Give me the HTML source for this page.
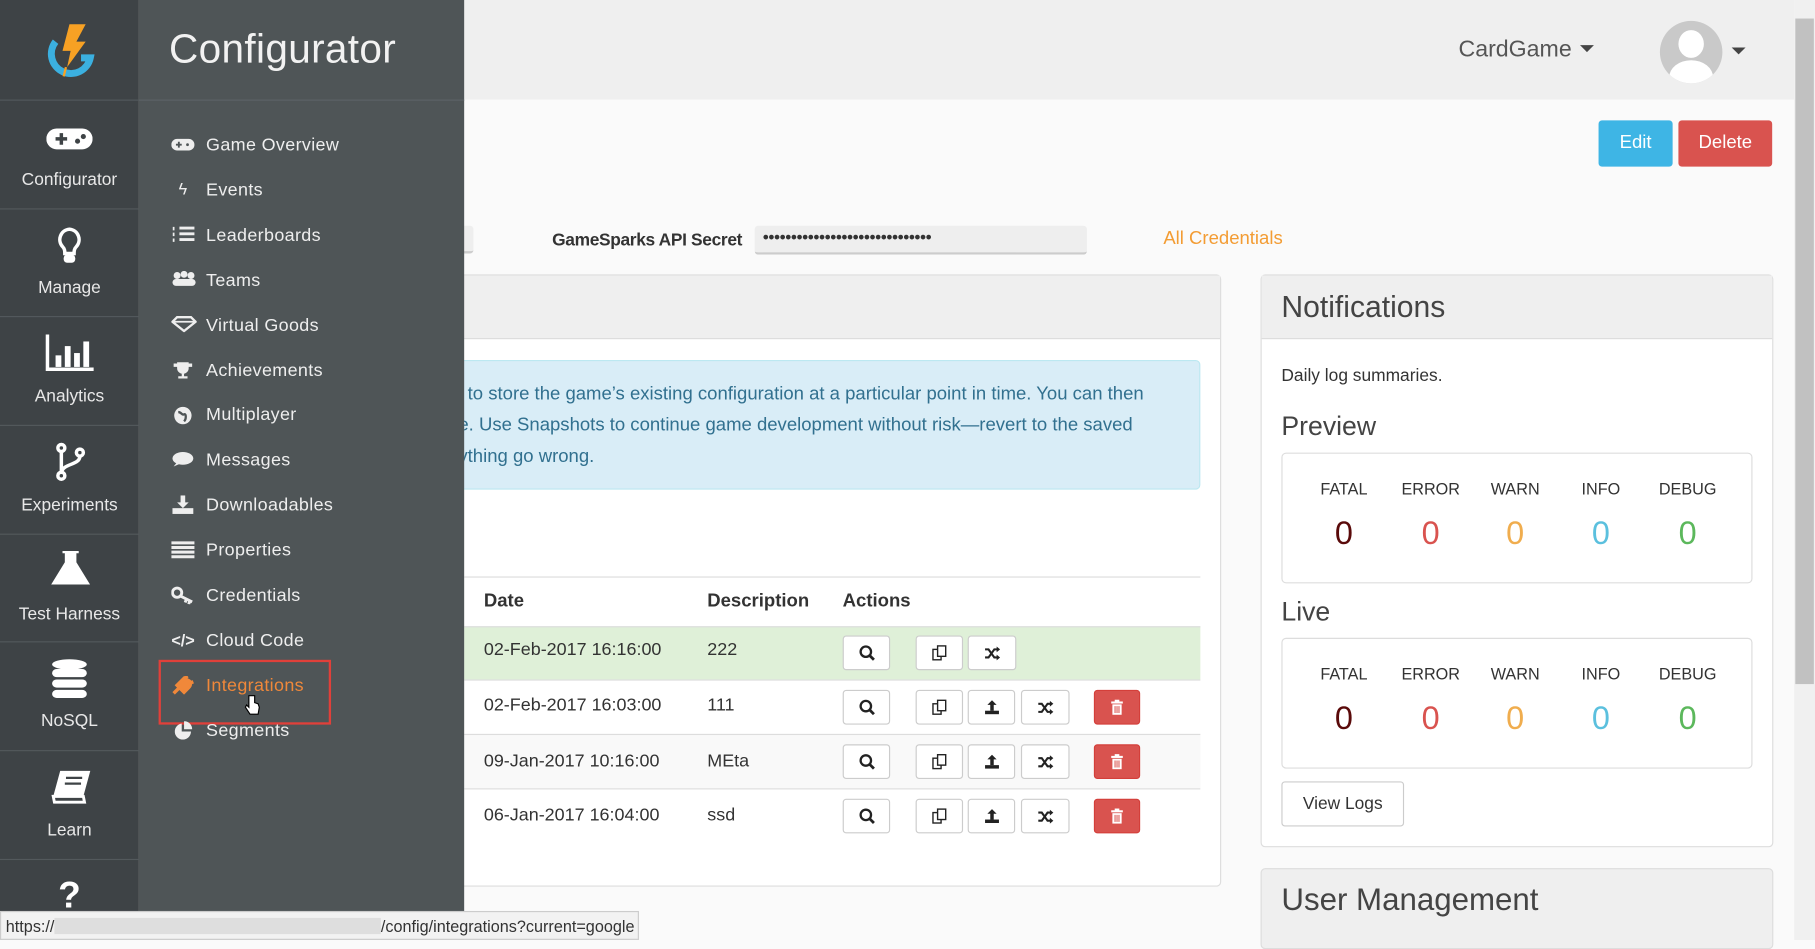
<!DOCTYPE html>
<html><head><meta charset="utf-8"><style>
*{box-sizing:border-box;margin:0;padding:0}
html,body{width:1815px;height:940px;overflow:hidden;background:#fafafa;font-family:"Liberation Sans",sans-serif}
#w{position:absolute;left:0;top:0;width:1568px;height:812px;transform:scale(1.15753);transform-origin:0 0;background:#fafafa}
.a{position:absolute}
.bar{left:0;top:0;width:120px;height:812px;background:#3e4346}
.bi{position:absolute;left:0;width:120px;border-top:1px solid #53595c;color:#e8e8e8;font-size:15px;text-align:center}
.bi span{position:absolute;left:0;right:0}
.p2{left:120px;top:0;width:281px;height:812px;background:#4f5557}
.mi{position:absolute;left:58px;color:#eee;font-size:15.5px;letter-spacing:.3px}
.mic{position:absolute;left:28px;width:20px;text-align:center;color:#eee;font-size:14px}
.btn{position:absolute;background:#fff;border:1px solid #ccc;border-radius:3px;height:30px;display:flex;align-items:center;justify-content:center;color:#333;font-size:13px}
.del{background:#d9534f;border-color:#d43f3a;color:#fff}
.lbl{position:absolute;font-size:14px;color:#333;width:80px;text-align:center}
.z{position:absolute;font-size:28px;width:80px;text-align:center}
.td{position:absolute;font-size:15.5px;color:#333}
</style></head><body><div id="w">
<div class="a" style="left:401px;top:0;width:1149px;height:86px;background:#efefef"></div>
<div class="a" style="left:1260px;top:32px;font-size:20px;color:#555">CardGame <span style="display:inline-block;border:6px solid transparent;border-top:6px solid #444;vertical-align:-2px;margin-left:2px"></span></div>
<div class="a" style="left:1434px;top:18px;width:54px;height:54px;border-radius:50%;background:#c9c9c9;overflow:hidden"><div class="a" style="left:16px;top:8px;width:22px;height:24px;border-radius:50%;background:#fff"></div><div class="a" style="left:8px;top:34px;width:38px;height:30px;border-radius:50% 50% 0 0;background:#fff"></div></div>
<div class="a" style="left:1496px;top:41px;border:6px solid transparent;border-top:6px solid #444"></div>
<div class="a" style="left:1550px;top:0;width:18px;height:812px;background:#f0f0f0"></div>
<div class="a" style="left:1551px;top:16px;width:16px;height:575px;background:#c1c1c1"></div>
<div class="a" style="left:1381px;top:104px;width:64px;height:40px;background:#3eb5e5;border-radius:3px;color:#fff;font-size:16px;text-align:center;line-height:40px">Edit</div>
<div class="a" style="left:1450px;top:104px;width:81px;height:40px;background:#d9534f;border-radius:3px;color:#fff;font-size:16px;text-align:center;line-height:40px">Delete</div>
<div class="a" style="left:395px;top:195px;width:14px;height:24px;background:#eee;border-radius:3px;border-bottom:2px solid #ccc"></div>
<div class="a" style="left:477px;top:199px;font-size:15px;font-weight:bold;color:#333;letter-spacing:-.3px;white-space:nowrap">GameSparks API Secret</div>
<div class="a" style="left:652px;top:195px;width:287px;height:25px;background:#eee;border-radius:3px;border-bottom:2px solid #ccc;font-size:15px;letter-spacing:-.4px;padding:2px 0 0 7px;color:#333;white-space:nowrap;overflow:hidden">••••••••••••••••••••••••••••••</div>
<div class="a" style="left:1005px;top:198px;font-size:16px;color:#f39c33">All Credentials</div>
<div class="a" style="left:395px;top:237px;width:660px;height:529px;border:1px solid #ddd;border-radius:4px;background:#fff"></div>
<div class="a" style="left:396px;top:238px;width:658px;height:55px;background:#efefef;border-bottom:1px solid #ddd"></div>
<div class="a" style="left:395px;top:311px;width:642px;height:112px;background:#d9edf7;border:1px solid #bce8f1;border-radius:4px;color:#31708f;font-size:16px;line-height:27px;padding:15px 0 0 8px;white-space:nowrap">
to store the game’s existing configuration at a particular point in time. You can then<br><span style="margin-left:-8px">e. Use Snapshots to continue game development without risk—revert to the saved</span><br><span style="margin-left:-8px">ything go wrong.</span></div>
<div class="a" style="left:401px;top:498px;width:636px;border-top:1px solid #ddd"></div>
<div class="a" style="left:418px;top:511px;font-size:16px;font-weight:bold;color:#333">Date</div>
<div class="a" style="left:611px;top:511px;font-size:16px;font-weight:bold;color:#333">Description</div>
<div class="a" style="left:728px;top:511px;font-size:16px;font-weight:bold;color:#333">Actions</div>
<div class="a" style="left:401px;top:541px;width:636px;height:46px;background:#dff0d8;border-top:1px solid #ddd"></div>
<div class="a" style="left:401px;top:587px;width:636px;height:47px;border-top:1px solid #ddd"></div>
<div class="a" style="left:401px;top:634px;width:636px;height:47px;background:#f9f9f9;border-top:1px solid #ddd"></div>
<div class="a" style="left:401px;top:681px;width:636px;height:47px;border-top:1px solid #ddd"></div>
<div class="td" style="left:418px;top:553px">02-Feb-2017 16:16:00</div><div class="td" style="left:611px;top:553px">222</div>
<div class="td" style="left:418px;top:601px">02-Feb-2017 16:03:00</div><div class="td" style="left:611px;top:601px">111</div>
<div class="td" style="left:418px;top:649px">09-Jan-2017 10:16:00</div><div class="td" style="left:611px;top:649px">MEta</div>
<div class="td" style="left:418px;top:696px">06-Jan-2017 16:04:00</div><div class="td" style="left:611px;top:696px">ssd</div>
<svg width="0" height="0" style="position:absolute"><defs>
<g id="srch"><circle cx="6" cy="6" r="4.5" fill="none" stroke="#222" stroke-width="2"/><path d="M9.5 9.5L13 13" stroke="#222" stroke-width="2.4"/></g>
<g id="cpy"><rect x="1" y="4" width="7" height="9" fill="#fff" stroke="#222" stroke-width="1.2"/><rect x="5" y="1" width="7" height="9" fill="#fff" stroke="#222" stroke-width="1.2"/></g>
<g id="upl"><path d="M7 1L3 5h2.5v5h3V5H11z" fill="#222"/><rect x="1" y="10" width="12" height="3" fill="#222"/></g>
<g id="shf"><path d="M1 4h3l5 7h3M1 11h3l5-7h3" fill="none" stroke="#222" stroke-width="1.8"/><path d="M11 1.5l3 2.5-3 2.5zM11 8.5l3 2.5-3 2.5z" fill="#222"/></g>
<g id="trs"><rect x="2" y="2" width="10" height="1.8" fill="#fff"/><rect x="3" y="4.5" width="8" height="9" fill="#fff"/><path d="M5.3 6v6M7 6v6M8.7 6v6" stroke="#d9534f" stroke-width=".9"/><rect x="5" y="0.5" width="4" height="2" fill="#fff"/></g>
</defs></svg>
<div class="btn" style="left:728px;top:549px;width:41px"><svg width="14" height="14"><use href="#srch"/></svg></div>
<div class="btn" style="left:791px;top:549px;width:41px"><svg width="14" height="14"><use href="#cpy"/></svg></div>
<div class="btn" style="left:836px;top:549px;width:42px"><svg width="15" height="14"><use href="#shf"/></svg></div>
<div class="btn" style="left:728px;top:596px;width:41px"><svg width="14" height="14"><use href="#srch"/></svg></div>
<div class="btn" style="left:791px;top:596px;width:41px"><svg width="14" height="14"><use href="#cpy"/></svg></div>
<div class="btn" style="left:836px;top:596px;width:41px"><svg width="14" height="14"><use href="#upl"/></svg></div>
<div class="btn" style="left:882px;top:596px;width:42px"><svg width="15" height="14"><use href="#shf"/></svg></div>
<div class="btn del" style="left:945px;top:596px;width:40px"><svg width="14" height="14"><use href="#trs"/></svg></div>
<div class="btn" style="left:728px;top:643px;width:41px"><svg width="14" height="14"><use href="#srch"/></svg></div>
<div class="btn" style="left:791px;top:643px;width:41px"><svg width="14" height="14"><use href="#cpy"/></svg></div>
<div class="btn" style="left:836px;top:643px;width:41px"><svg width="14" height="14"><use href="#upl"/></svg></div>
<div class="btn" style="left:882px;top:643px;width:42px"><svg width="15" height="14"><use href="#shf"/></svg></div>
<div class="btn del" style="left:945px;top:643px;width:40px"><svg width="14" height="14"><use href="#trs"/></svg></div>
<div class="btn" style="left:728px;top:690px;width:41px"><svg width="14" height="14"><use href="#srch"/></svg></div>
<div class="btn" style="left:791px;top:690px;width:41px"><svg width="14" height="14"><use href="#cpy"/></svg></div>
<div class="btn" style="left:836px;top:690px;width:41px"><svg width="14" height="14"><use href="#upl"/></svg></div>
<div class="btn" style="left:882px;top:690px;width:42px"><svg width="15" height="14"><use href="#shf"/></svg></div>
<div class="btn del" style="left:945px;top:690px;width:40px"><svg width="14" height="14"><use href="#trs"/></svg></div>
<div class="a" style="left:1089px;top:237px;width:443px;height:495px;border:1px solid #ddd;border-radius:4px;background:#fff"></div>
<div class="a" style="left:1090px;top:238px;width:441px;height:55px;background:#efefef;border-bottom:1px solid #ddd"></div>
<div class="a" style="left:1107px;top:250px;font-size:26px;color:#444;font-weight:300">Notifications</div>
<div class="a" style="left:1107px;top:316px;font-size:15px;color:#333">Daily log summaries.</div>
<div class="a" style="left:1107px;top:355px;font-size:23px;color:#444">Preview</div>
<div class="a" style="left:1107px;top:391px;width:407px;height:113px;border:1px solid #ddd;border-radius:4px"></div>
<div class="a" style="left:1107px;top:515px;font-size:23px;color:#444">Live</div>
<div class="a" style="left:1107px;top:551px;width:407px;height:113px;border:1px solid #ddd;border-radius:4px"></div>
<div class="lbl" style="left:1121px;top:414px">FATAL</div><div class="lbl" style="left:1196px;top:414px">ERROR</div><div class="lbl" style="left:1269px;top:414px">WARN</div><div class="lbl" style="left:1343px;top:414px">INFO</div><div class="lbl" style="left:1418px;top:414px">DEBUG</div>
<div class="z" style="left:1121px;top:445px;color:#5a0a0a">0</div><div class="z" style="left:1196px;top:445px;color:#d9534f">0</div><div class="z" style="left:1269px;top:445px;color:#f0ad4e">0</div><div class="z" style="left:1343px;top:445px;color:#5bc0de">0</div><div class="z" style="left:1418px;top:445px;color:#5cb85c">0</div>
<div class="lbl" style="left:1121px;top:574px">FATAL</div><div class="lbl" style="left:1196px;top:574px">ERROR</div><div class="lbl" style="left:1269px;top:574px">WARN</div><div class="lbl" style="left:1343px;top:574px">INFO</div><div class="lbl" style="left:1418px;top:574px">DEBUG</div>
<div class="z" style="left:1121px;top:605px;color:#5a0a0a">0</div><div class="z" style="left:1196px;top:605px;color:#d9534f">0</div><div class="z" style="left:1269px;top:605px;color:#f0ad4e">0</div><div class="z" style="left:1343px;top:605px;color:#5bc0de">0</div><div class="z" style="left:1418px;top:605px;color:#5cb85c">0</div>
<div class="a" style="left:1107px;top:675px;width:106px;height:39px;border:1px solid #ccc;border-radius:3px;font-size:15px;color:#333;text-align:center;line-height:37px">View Logs</div>
<div class="a" style="left:1089px;top:750px;width:443px;height:70px;border:1px solid #ddd;border-radius:4px;background:#efefef"></div>
<div class="a" style="left:1107px;top:762px;font-size:27px;color:#444">User Management</div>
<div class="a bar">
<svg class="a" style="left:36px;top:18px" width="50" height="58" viewBox="0 0 50 58"><path d="M12 18a17 17 0 1 0 30 14h-8" fill="none" stroke="#3bb0e0" stroke-width="6"/><path d="M24 3h14l-8 15h8l-16 22 3-14h-7z" fill="#f7a124"/><path d="M21 40l-2 8" stroke="#f7a124" stroke-width="2"/></svg>
<div class="bi" style="top:86px;height:94px"><svg class="a" style="left:40px;top:22px" width="40" height="22"><rect x="0" y="2" width="40" height="18" rx="9" fill="#fff"/><path d="M8 11h10M13 6v10" stroke="#3e4346" stroke-width="3"/><circle cx="27" cy="13" r="2.2" fill="#3e4346"/><circle cx="32" cy="9" r="2.2" fill="#3e4346"/></svg><span style="top:60px">Configurator</span></div>
<div class="bi" style="top:180px;height:93px"><svg class="a" style="left:49px;top:15px" width="22" height="32"><path d="M11 2a9 9 0 0 0-6 15c2 2 2 4 2 6h8c0-2 0-4 2-6A9 9 0 0 0 11 2z" fill="none" stroke="#fff" stroke-width="3"/><rect x="6" y="24" width="10" height="7" rx="3" fill="#fff"/></svg><span style="top:59px">Manage</span></div>
<div class="bi" style="top:273px;height:94px"><svg class="a" style="left:39px;top:15px" width="42" height="32"><path d="M2 0v30h40" fill="none" stroke="#fff" stroke-width="3"/><rect x="9" y="18" width="5" height="10" fill="#fff"/><rect x="17" y="10" width="5" height="18" fill="#fff"/><rect x="25" y="16" width="5" height="12" fill="#fff"/><rect x="33" y="6" width="5" height="22" fill="#fff"/></svg><span style="top:60px">Analytics</span></div>
<div class="bi" style="top:367px;height:94px"><svg class="a" style="left:48px;top:14px" width="26" height="34"><circle cx="5" cy="5" r="3" fill="none" stroke="#fff" stroke-width="3"/><circle cx="5" cy="29" r="3" fill="none" stroke="#fff" stroke-width="3"/><circle cx="21" cy="9" r="3" fill="none" stroke="#fff" stroke-width="3"/><path d="M5 8v18M21 12c0 8-14 6-16 14" fill="none" stroke="#fff" stroke-width="3"/></svg><span style="top:60px">Experiments</span></div>
<div class="bi" style="top:461px;height:93px"><svg class="a" style="left:44px;top:14px" width="34" height="30"><path d="M10 1h14M13 1v9L2 28h30L21 10V1" fill="#fff" stroke="#fff" stroke-width="2"/></svg><span style="top:60px">Test Harness</span></div>
<div class="bi" style="top:554px;height:94px"><svg class="a" style="left:44px;top:14px" width="32" height="36"><ellipse cx="16" cy="5" rx="15" ry="4.5" fill="#fff"/><rect x="1" y="9" width="30" height="7" rx="4" fill="#fff"/><rect x="1" y="18" width="30" height="7" rx="4" fill="#fff"/><rect x="1" y="27" width="30" height="7" rx="4" fill="#fff"/></svg><span style="top:59px">NoSQL</span></div>
<div class="bi" style="top:648px;height:94px"><svg class="a" style="left:44px;top:15px" width="36" height="32"><path d="M8 2h26l-6 22H2z" fill="#fff"/><path d="M2 24h26l1 5H3z" fill="none" stroke="#fff" stroke-width="2.5"/><path d="M13 8h14M12 13h14" stroke="#3e4346" stroke-width="2"/></svg><span style="top:60px">Learn</span></div>
<div class="bi" style="top:742px;height:70px"><span style="top:12px;font-size:32px;font-weight:bold;color:#fff">?</span></div>
</div>
<div class="a p2">
<div class="a" style="left:26px;top:23px;font-size:35px;color:#f2f2f2;letter-spacing:.3px">Configurator</div>
<div class="a" style="left:0;top:86px;width:281px;border-top:1px solid #5d6366"></div>
<div class="mic" style="top:118px"><svg width="20" height="12"><rect x="0" y="1" width="20" height="10" rx="5" fill="#eee"/><path d="M4 6h5M6.5 3.5v5" stroke="#4f5557" stroke-width="1.6"/><circle cx="14" cy="6" r="1.2" fill="#4f5557"/></svg></div><div class="mi" style="top:117px">Game Overview</div>
<div class="mic" style="top:155px">ϟ</div><div class="mi" style="top:156px">Events</div>
<div class="mic" style="top:194px"><svg width="20" height="16"><path d="M7 3h13M7 8h13M7 13h13" stroke="#eee" stroke-width="2.5"/><path d="M2 2v3M2 7v3M2 12v3" stroke="#eee" stroke-width="1.5"/></svg></div><div class="mi" style="top:195px">Leaderboards</div>
<div class="mic" style="top:234px"><svg width="22" height="14"><circle cx="5" cy="4" r="3" fill="#eee"/><circle cx="11" cy="3" r="3" fill="#eee"/><circle cx="17" cy="4" r="3" fill="#eee"/><rect x="1" y="7" width="20" height="6" rx="3" fill="#eee"/></svg></div><div class="mi" style="top:234px">Teams</div>
<div class="mic" style="top:273px"><svg width="22" height="14"><path d="M5 1h12l4 4-10 8L1 5z" fill="none" stroke="#eee" stroke-width="2"/><path d="M1 5h20" stroke="#eee" stroke-width="1.5"/></svg></div><div class="mi" style="top:273px">Virtual Goods</div>
<div class="mic" style="top:312px"><svg width="18" height="16"><path d="M4 1h10v5a5 5 0 0 1-10 0zM1 2h3v3H1zM14 2h3v3h-3zM8 10h2v3H8zM5 13h8v2H5z" fill="#eee"/></svg></div><div class="mi" style="top:312px">Achievements</div>
<div class="mic" style="top:351px"><svg width="16" height="16"><circle cx="8" cy="8" r="7.5" fill="#eee"/><path d="M4 5c3 0 3 3 5 2s2 4 0 6" stroke="#4f5557" stroke-width="2" fill="none"/></svg></div><div class="mi" style="top:350px">Multiplayer</div>
<div class="mic" style="top:390px"><svg width="20" height="14"><ellipse cx="10" cy="6" rx="9" ry="5.5" fill="#eee"/><path d="M2 13l4-5 3 2z" fill="#eee"/></svg></div><div class="mi" style="top:389px">Messages</div>
<div class="mic" style="top:428px"><svg width="20" height="16"><path d="M8 0h4v6h3l-5 5-5-5h3z" fill="#eee"/><rect x="1" y="11" width="18" height="5" fill="#eee"/></svg></div><div class="mi" style="top:428px">Downloadables</div>
<div class="mic" style="top:467px"><svg width="20" height="16"><path d="M0 2h20M0 6h20M0 10h20M0 14h20" stroke="#eee" stroke-width="2.6"/></svg></div><div class="mi" style="top:467px">Properties</div>
<div class="mic" style="top:506px"><svg width="20" height="16"><circle cx="5" cy="6" r="4" fill="none" stroke="#eee" stroke-width="2.5"/><path d="M8 9l10 5M13 11.5l-1 3M16 13l-1 3" stroke="#eee" stroke-width="2.5"/></svg></div><div class="mi" style="top:506px">Credentials</div>
<div class="mic" style="top:545px;font-size:14px;font-weight:bold">&lt;/&gt;</div><div class="mi" style="top:545px">Cloud Code</div>
<div class="a" style="left:17px;top:570px;width:149px;height:56px;border:2px solid #e0403a"></div>
<div class="mic" style="top:584px"><svg width="20" height="16"><path d="M2 15l4-4M5 8l6 6 4-4c2-2 2-5 0-6L11 2 5 8zM10 3l4-3M14 7l5-2" stroke="#f0883a" stroke-width="3" fill="#f0883a"/></svg></div><div class="mi" style="top:584px;color:#f0883a">Integrations</div>
<div class="mic" style="top:623px"><svg width="18" height="16"><path d="M8 2v7h8a7 7 0 1 1-8-7z" fill="#eee"/><path d="M10 0a7 7 0 0 1 7 7h-7z" fill="#eee"/></svg></div><div class="mi" style="top:623px">Segments</div>
<svg class="a" style="left:91px;top:600px" width="14" height="18"><path d="M4 1v10l-2-2-1 2 4 6h7l1-6-1-3-3-1V1z" fill="#fff" stroke="#000" stroke-width="1"/></svg>
</div>
<div class="a" style="left:0;top:787px;width:552px;height:25px;background:#f2f2f2;border:1px solid #ccc;font-size:14px;color:#333;padding:4px 0 0 4px;white-space:nowrap;overflow:hidden">https://<span style="display:inline-block;width:282px;height:14px;background:#dedede;vertical-align:-2px"></span>/config/integrations?current=google</div>
</div></body></html>
